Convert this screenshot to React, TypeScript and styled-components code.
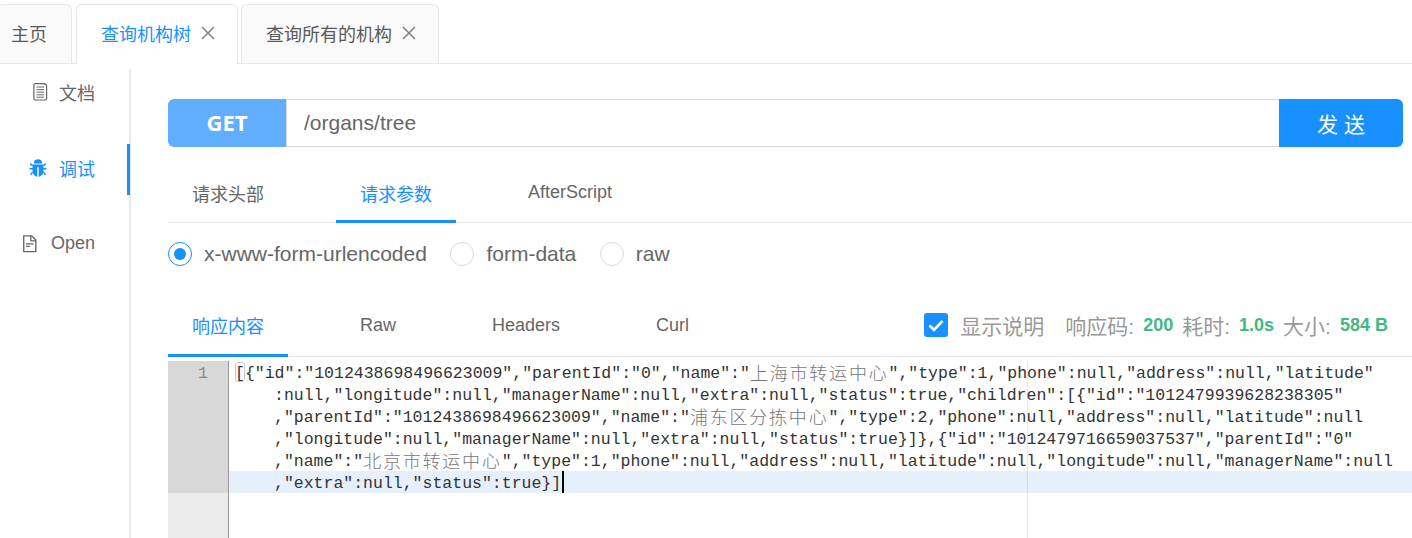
import styled, { createGlobalStyle } from 'styled-components'
import { AiFillBug, AiOutlineFileText } from 'react-icons/ai'

const sans = `"Liberation Sans", "Noto Sans CJK SC", sans-serif`

const GlobalStyle = createGlobalStyle`
  html, body {
    margin: 0;
    background: #fff;
    overflow: hidden;
  }
  * {
    box-sizing: border-box;
  }
`

const pageTabs = [
  { label: '主页', closable: false },
  { label: '查询机构树', closable: true, active: true },
  { label: '查询所有的机构', closable: true },
]

const codeLines = [
  ['[{"id":"1012438698496623009","parentId":"0","name":"', '上海市转运中心', '","type":1,"phone":null,"address":null,"latitude"'],
  [':null,"longitude":null,"managerName":null,"extra":null,"status":true,"children":[{"id":"1012479939628238305"'],
  [',"parentId":"1012438698496623009","name":"', '浦东区分拣中心', '","type":2,"phone":null,"address":null,"latitude":null'],
  [',"longitude":null,"managerName":null,"extra":null,"status":true}]},{"id":"1012479716659037537","parentId":"0"'],
  [',"name":"', '北京市转运中心', '","type":1,"phone":null,"address":null,"latitude":null,"longitude":null,"managerName":null'],
  [',"extra":null,"status":true}]'],
]

const PaperIcon = () => (
  <svg width="16" height="19" viewBox="0 0 16 19" fill="none" stroke="#666" strokeWidth="1.2">
    <path d="M3.5 1.6h9.5v0.8c0 0 1.6 0 1.6 1.6v12.4c0 1-0.6 1.6-1.6 1.6h-9.5c-1 0-1.6-0.6-1.6-1.6v-13.2c0-1 0.6-1.6 1.6-1.6z" />
    <path d="M4.5 5h7.5M4.5 7.6h7.5M4.5 10.2h7.5M4.5 12.8h7.5M4.5 15.2h7.5" strokeWidth="1" />
  </svg>
)

const CloseIcon = () => (
  <svg width="14" height="14" viewBox="0 0 14 14" fill="none" stroke="#808080" strokeWidth="1.5">
    <path d="M1 1l12 12M13 1l-12 12" />
  </svg>
)

const App: React.FC = () => {
  return (
    <Page>
      <GlobalStyle />
      <TabBar>
        {pageTabs.map((tab) => (
          <PageTab key={tab.label} $active={tab.active} $closable={tab.closable}>
            {tab.label}
            {tab.closable && <CloseIcon />}
          </PageTab>
        ))}
      </TabBar>
      <Main>
        <Sidebar>
          <NavItem>
            <PaperIcon />
            文档
          </NavItem>
          <NavItem $active>
            <AiFillBug size={20} />
            调试
          </NavItem>
          <NavItem>
            <AiOutlineFileText size={19.5} />
            Open
          </NavItem>
        </Sidebar>
        <Content>
          <RequestBar>
            <Method>GET</Method>
            <UrlInput>/organs/tree</UrlInput>
            <SendButton>发送</SendButton>
          </RequestBar>
          <RequestTabs>
            <TabItem>请求头部</TabItem>
            <TabItem $active>请求参数</TabItem>
            <TabItem>AfterScript</TabItem>
          </RequestTabs>
          <RadioGroup>
            <RadioLabel>
              <RadioDot $checked />
              x-www-form-urlencoded
            </RadioLabel>
            <RadioLabel>
              <RadioDot />
              form-data
            </RadioLabel>
            <RadioLabel>
              <RadioDot />
              raw
            </RadioLabel>
          </RadioGroup>
          <ResponseBar>
            <TabItem $active>响应内容</TabItem>
            <TabItem>Raw</TabItem>
            <TabItem>Headers</TabItem>
            <TabItem>Curl</TabItem>
            <StatusGroup>
              <CheckBox>
                <svg width="16" height="13" viewBox="0 0 16 13" fill="none" stroke="#fff" strokeWidth="2.6">
                  <path d="M1.5 6.5l4.5 4.5 8.5-9" />
                </svg>
              </CheckBox>
              <CheckText>显示说明</CheckText>
              <StatusLabel>响应码:</StatusLabel>
              <StatusValue>200</StatusValue>
              <StatusLabel>耗时:</StatusLabel>
              <StatusValue>1.0s</StatusValue>
              <StatusLabel>大小:</StatusLabel>
              <StatusValue>584 B</StatusValue>
            </StatusGroup>
          </ResponseBar>
          <Editor>
            <Gutter>
              <GutterActive>1</GutterActive>
            </Gutter>
            <Code>
              <PrintMargin />
              {codeLines.map((parts, row) => (
                <CodeLine key={row} $first={row === 0} $active={row === codeLines.length - 1}>
                  {row === 0 && <BracketMark />}
                  {parts.map((part, i) => (i === 1 ? <Cjk key={i}>{part}</Cjk> : <span key={i}>{part}</span>))}
                  {row === codeLines.length - 1 && <Cursor />}
                </CodeLine>
              ))}
            </Code>
          </Editor>
        </Content>
      </Main>
    </Page>
  )
}

const Page = styled.div`
  height: 100vh;
  display: flex;
  flex-direction: column;
  overflow: hidden;
  font-family: ${sans};
  color: #666;
`

const TabBar = styled.div`
  height: 64px;
  flex: none;
  display: flex;
  gap: 4px;
  padding-top: 4px;
  border-bottom: 1px solid #e8e8e8;
`

const PageTab = styled.div<{ $active?: boolean; $closable?: boolean }>`
  height: ${(props) => (props.$active ? '60px' : '59px')};
  display: flex;
  align-items: center;
  gap: 10px;
  padding: ${(props) => (props.$closable ? '0 22px 3px 24px' : '0 24px 3px 13px')};
  margin-left: ${(props) => (props.$closable ? '0' : '-3px')};
  font-size: 18px;
  color: ${(props) => (props.$active ? '#1890ff' : '#595959')};
  background: ${(props) => (props.$active ? '#fff' : '#fafafa')};
  border: 1px solid #e8e8e8;
  border-bottom: none;
  border-radius: 6px 6px 0 0;
  position: relative;
  & + & + & {
    margin-left: -1px;
  }
`

const Main = styled.div`
  flex: 1;
  display: flex;
  min-height: 0;
`

const Sidebar = styled.nav`
  width: 131px;
  flex: none;
  margin-top: 5px;
  border-right: 2px solid #e8e8e8;
  display: flex;
  flex-direction: column;
  gap: 25px;
  & > :first-child {
    margin-top: -1px;
  }
`

const NavItem = styled.div<{ $active?: boolean }>`
  height: 51px;
  margin-right: -1px;
  display: flex;
  align-items: center;
  justify-content: flex-end;
  gap: 11px;
  padding: 0 32px 4px 0;
  font-size: 18px;
  color: ${(props) => (props.$active ? '#1890ff' : '#666')};
  border-right: 3px solid ${(props) => (props.$active ? '#1890ff' : 'transparent')};
`

const Content = styled.main`
  flex: 1;
  min-width: 0;
  padding: 35px 0 0 37px;
  display: flex;
  flex-direction: column;
`

const RequestBar = styled.div`
  height: 48px;
  flex: none;
  margin-right: 9px;
  display: flex;
`

const Method = styled.div`
  width: 119px;
  display: flex;
  align-items: center;
  justify-content: center;
  padding-bottom: 2px;
  background: #61adff;
  color: #fff;
  font-family: "Open Sans", sans-serif;
  font-size: 22px;
  font-weight: 700;
  border-radius: 6px 0 0 6px;
  border-right: 1px solid #d9d9d9;
`

const UrlInput = styled.div`
  flex: 1;
  display: flex;
  align-items: center;
  padding-left: 17px;
  font-size: 21px;
  color: #666;
  border-top: 1px solid #d9d9d9;
  border-bottom: 1px solid #d9d9d9;
`

const SendButton = styled.div`
  width: 124px;
  display: flex;
  align-items: center;
  justify-content: center;
  padding-left: 6px;
  background: #1890ff;
  color: #fff;
  font-size: 21px;
  letter-spacing: 6px;
  border-radius: 0 6px 6px 0;
`

const RequestTabs = styled.div`
  height: 76px;
  flex: none;
  display: flex;
  gap: 48px;
  padding-top: 18px;
  border-bottom: 1px solid #e8e8e8;
`

const TabItem = styled.div<{ $active?: boolean }>`
  display: flex;
  align-items: center;
  padding: 0 24px;
  font-size: 18px;
  margin-bottom: -1px;
  color: ${(props) => (props.$active ? '#1890ff' : '#666')};
  border-bottom: 3px solid ${(props) => (props.$active ? '#1890ff' : 'transparent')};
`

const RadioGroup = styled.div`
  height: 62px;
  flex: none;
  display: flex;
  align-items: center;
  gap: 23.5px;
`

const RadioLabel = styled.label`
  display: flex;
  align-items: center;
  gap: 12px;
  font-size: 21px;
  color: #666;
`

const RadioDot = styled.span<{ $checked?: boolean }>`
  width: 24px;
  height: 24px;
  border-radius: 50%;
  border: 1px solid ${(props) => (props.$checked ? '#1890ff' : '#d9d9d9')};
  display: flex;
  align-items: center;
  justify-content: center;
  &::after {
    content: '';
    width: 12px;
    height: 12px;
    border-radius: 50%;
    background: ${(props) => (props.$checked ? '#1890ff' : 'transparent')};
  }
`

const ResponseBar = styled.div`
  height: 71px;
  margin-top: 1px;
  flex: none;
  display: flex;
  gap: 48px;
  padding-top: 10px;
  border-bottom: 1px solid #e8e8e8;
`

const StatusGroup = styled.div`
  margin-left: auto;
  padding: 0 24px 2px 0;
  display: flex;
  align-items: center;
`

const CheckBox = styled.span`
  width: 24px;
  height: 24px;
  margin-right: 12px;
  background: #1890ff;
  border-radius: 3px;
  display: flex;
  align-items: center;
  justify-content: center;
`

const CheckText = styled.span`
  font-size: 21px;
  color: #999;
  margin-right: 21px;
`

const StatusLabel = styled.span`
  font-size: 21px;
  color: #999;
  margin-right: 9px;
`

const StatusValue = styled.span`
  font-size: 18px;
  font-weight: 700;
  color: #42b983;
  margin-right: 9px;
  &:last-child {
    margin-right: 0;
  }
`

const Editor = styled.div`
  flex: 1;
  min-height: 0;
  margin-top: 4px;
  display: flex;
  font-family: "Liberation Mono", "Noto Sans CJK SC", monospace;
  font-size: 16.5px;
  line-height: 18px;
  color: #333;
`

const Gutter = styled.div`
  width: 61px;
  flex: none;
  background: #ebebeb;
  border-right: 1px solid #999;
`

const GutterActive = styled.div`
  height: 132px;
  background: #d8d8d8;
  padding: 4px 20px 0 0;
  text-align: right;
  color: #888;
`

const Code = styled.div`
  flex: 1;
  min-width: 0;
  position: relative;
`

const PrintMargin = styled.div`
  position: absolute;
  top: 0;
  bottom: 0;
  left: 798px;
  width: 1px;
  background: #e8e8e8;
`

const CodeLine = styled.div<{ $first?: boolean; $active?: boolean }>`
  height: 22px;
  position: relative;
  white-space: pre;
  padding-top: 4px;
  padding-left: ${(props) => (props.$first ? '6px' : '45px')};
  background: ${(props) => (props.$active ? 'rgba(24, 120, 230, 0.11)' : 'transparent')};
`

const Cjk = styled.span`
  display: inline-block;
  height: 18px;
  margin-top: -2px;
  vertical-align: top;
  font-family: "Noto Sans CJK SC", sans-serif;
  font-size: 18px;
  font-weight: 300;
  line-height: 18px;
  letter-spacing: 1.8px;
  color: #777;
`

const BracketMark = styled.span`
  position: absolute;
  left: 6px;
  top: 1px;
  width: 10px;
  height: 20px;
  border: 1px solid #c8c8c8;
  border-radius: 3px;
`

const Cursor = styled.span`
  display: inline-block;
  width: 2px;
  height: 22px;
  margin: -4px 0 0 1px;
  vertical-align: top;
  background: #000;
`

export default App
